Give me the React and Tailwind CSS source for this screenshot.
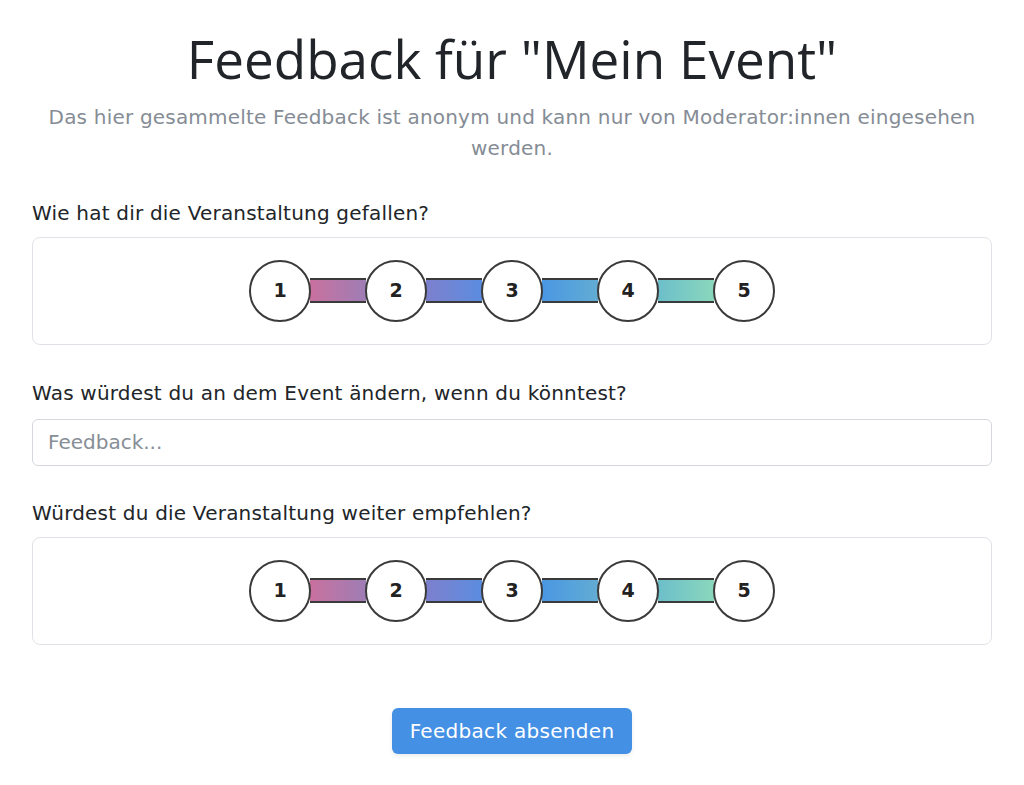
import { useState } from "react";

const segments = [
  "bg-gradient-to-r from-[#c8709e] to-[#9e7db5]",
  "bg-gradient-to-r from-[#7c80cd] to-[#5a8cdf]",
  "bg-gradient-to-r from-[#4a97e3] to-[#62acd3]",
  "bg-gradient-to-r from-[#6cbfca] to-[#8ad7bc]",
];

function Rating({ value, onChange }) {
  return (
    <div className="h-[108px] border border-[#dfe2e6] rounded-lg flex items-center justify-center">
      {[1, 2, 3, 4, 5].map((n, i) => (
        <div key={n} className="flex items-center">
          {i > 0 && (
            <div
              className={`w-[56px] h-[25px] -mx-[1px] border-y-2 border-[#3a3a3a] ${segments[i - 1]}`}
            />
          )}
          <button
            onClick={() => onChange(n)}
            className={`relative z-10 w-[62px] h-[62px] rounded-full border-2 border-[#3a3a3a] flex items-center justify-center text-[19px] font-black text-[#222] ${
              value === n ? "bg-[#eef4ff]" : "bg-white"
            }`}
          >
            {n}
          </button>
        </div>
      ))}
    </div>
  );
}

export default function App() {
  const [rating1, setRating1] = useState(null);
  const [rating2, setRating2] = useState(null);
  const [text, setText] = useState("");

  return (
    <div
      className="w-[960px] mx-auto pb-8 text-[#212529]"
      style={{ fontFamily: '"DejaVu Sans", "Open Sans", sans-serif' }}
    >
      <h1
        className="text-center text-[53px] leading-[1.2] font-normal pt-[27px]"
        style={{ fontFamily: '"Open Sans", sans-serif' }}
      >
        Feedback für "Mein Event"
      </h1>
      <p className="text-center text-[20px] leading-[31px] tracking-[0.2px] text-[#858c95] mt-[11px] px-[12px]">
        Das hier gesammelte Feedback ist anonym und kann nur von Moderator:innen eingesehen werden.
      </p>

      <label className="block text-[20px] leading-[30px] tracking-[0.2px] mt-[34px]">
        Wie hat dir die Veranstaltung gefallen?
      </label>
      <div className="mt-[9px]">
        <Rating value={rating1} onChange={setRating1} />
      </div>

      <label className="block text-[20px] leading-[30px] tracking-[0.2px] mt-[33px]">
        Was würdest du an dem Event ändern, wenn du könntest?
      </label>
      <input
        value={text}
        onChange={(e) => setText(e.target.value)}
        placeholder="Feedback..."
        className="mt-[11px] w-full h-[47px] border border-[#d4d8dd] rounded-md px-[15px] text-[20px] placeholder-[#868e96] outline-none"
      />

      <label className="block text-[20px] leading-[30px] tracking-[0.2px] mt-[32px]">
        Würdest du die Veranstaltung weiter empfehlen?
      </label>
      <div className="mt-[9px]">
        <Rating value={rating2} onChange={setRating2} />
      </div>

      <div className="flex justify-center mt-[63px]">
        <button className="w-[240px] h-[46px] rounded-md bg-[#4390e5] text-white text-[20px] tracking-[0.3px] shadow-[0_2px_4px_rgba(0,0,0,0.08)]">
          Feedback absenden
        </button>
      </div>
    </div>
  );
}
